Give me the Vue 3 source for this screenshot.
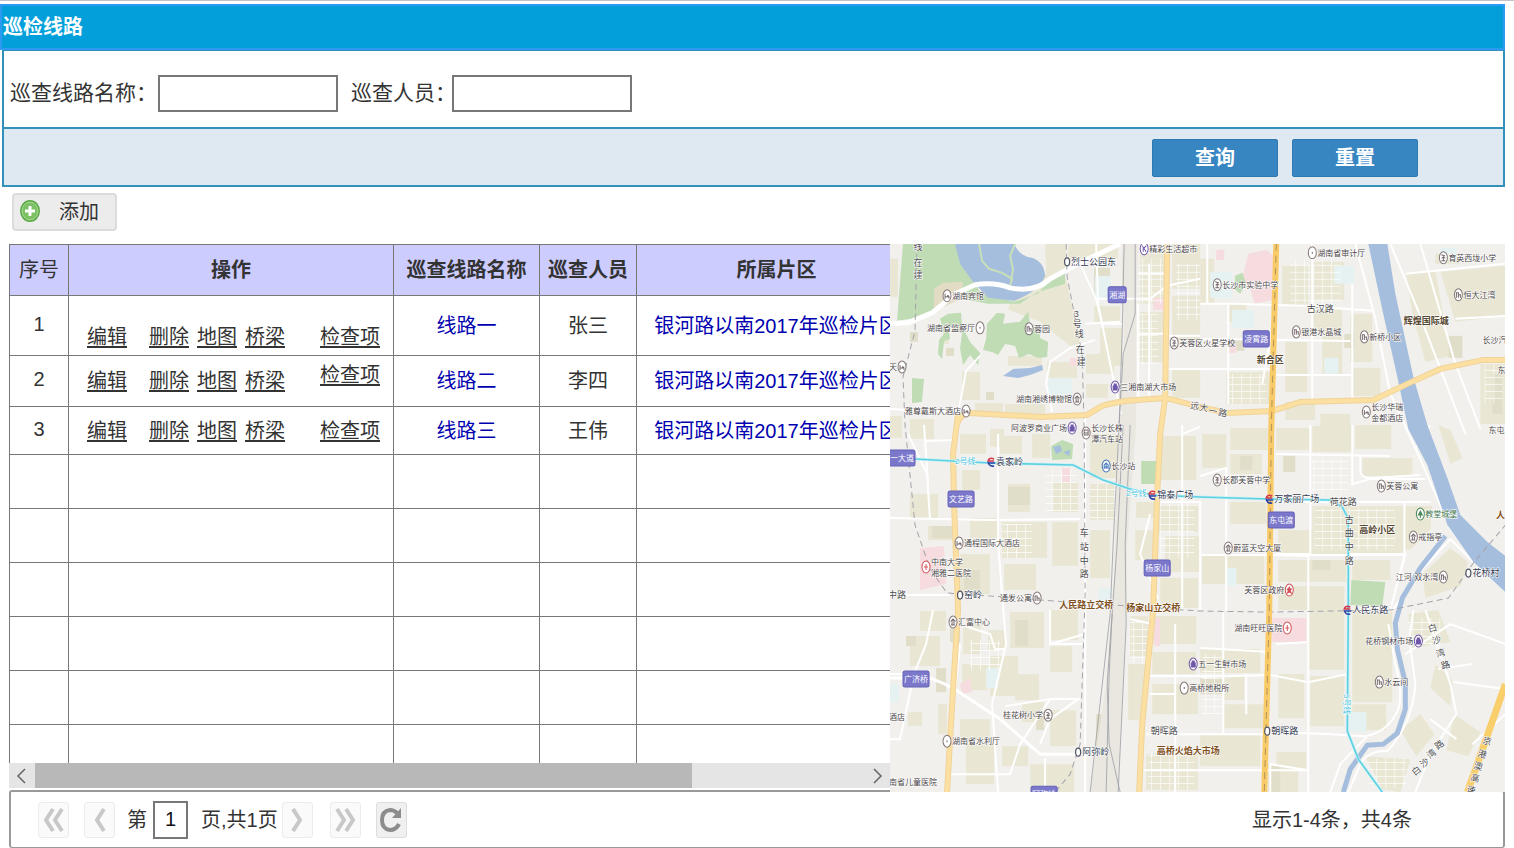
<template>
  <div class="page">
    <section class="panel">
      <h1 class="panel-title">巡检线路</h1>
      <form class="search" @submit.prevent>
        <div class="fields">
          <label for="route-name">巡查线路名称：</label>
          <input id="route-name" v-model="query.name" type="text" />
          <label for="route-user">巡查人员：</label>
          <input id="route-user" v-model="query.user" type="text" />
        </div>
        <div class="actions">
          <button type="submit" class="btn">查询</button>
          <button type="button" class="btn" @click="reset">重置</button>
        </div>
      </form>
    </section>

    <div class="toolbar">
      <button type="button" class="add-btn">
        <svg width="22" height="24" viewBox="0 0 22 24">
          <ellipse cx="11" cy="11" rx="10" ry="11" fill="#5aa845" />
          <ellipse cx="11" cy="11" rx="8" ry="9" fill="#7cc264" stroke="#a9dc96" />
          <path d="M11 6v10M6 11h10" stroke="#fff" stroke-width="3" />
        </svg>
        <span>添加</span>
      </button>
    </div>

    <div class="main">
      <div class="list">
        <div class="table-view">
          <table>
            <colgroup>
              <col class="c-no" /><col class="c-ops" /><col class="c-name" />
              <col class="c-user" /><col class="c-area" /><col />
            </colgroup>
            <thead>
              <tr>
                <th class="plain">序号</th>
                <th>操作</th>
                <th>巡查线路名称</th>
                <th>巡查人员</th>
                <th>所属片区</th>
                <th></th>
              </tr>
            </thead>
            <tbody>
              <tr v-for="r in rows" :key="r.id" :class="r.cls">
                <td class="no">{{ r.id }}</td>
                <td>
                  <div class="ops">
                    <a href="#" class="edit">编辑</a>
                    <a href="#">删除</a>
                    <a href="#">地图</a>
                    <a href="#">桥梁</a>
                    <a href="#" class="check">检查项</a>
                  </div>
                </td>
                <td class="blue">{{ r.name }}</td>
                <td>{{ r.user }}</td>
                <td class="blue">{{ r.area }}</td>
                <td></td>
              </tr>
              <tr v-for="n in 6" :key="'e' + n" class="empty">
                <td v-for="c in 6" :key="c"></td>
              </tr>
            </tbody>
          </table>
        </div>
        <div class="scrollbar">
          <button type="button" aria-label="向左">
            <svg width="12" height="16" viewBox="0 0 12 16"><path d="M9 1L2 8l7 7" /></svg>
          </button>
          <div class="track"><div class="thumb"></div></div>
          <button type="button" aria-label="向右">
            <svg width="12" height="16" viewBox="0 0 12 16"><path d="M3 1l7 7-7 7" /></svg>
          </button>
        </div>
      </div>

      <svg class="map" viewBox="0 0 615 548" preserveAspectRatio="xMidYMid slice">
        <defs>
          <pattern id="lanes" width="9" height="7" patternUnits="userSpaceOnUse">
            <path d="M0 0H9M0 0V7" stroke="#fff" stroke-width="1.2" fill="none" />
          </pattern>
        </defs>
        <rect width="615" height="548" fill="#f2f0ed" />

        <!-- blocks -->
        <path v-for="(d, i) in blocks" :key="'b' + i" :d="d" fill="#e9e7d4" />
        <path v-for="(d, i) in darkBlocks" :key="'d' + i" :d="d" fill="#e0ddc9" />
        <path v-for="(d, i) in pinks" :key="'p' + i" :d="d" fill="#f6dcdf" />
        <path v-for="(d, i) in pales" :key="'q' + i" :d="d" fill="#e6f2f1" />
        <path v-for="(d, i) in lanes" :key="'l' + i" :d="d" fill="url(#lanes)" />

        <!-- parks and water -->
        <path d="M13 0H68L76 25L90 48L124 58L148 50L163 32L175 24V40L146 49L130 60L98 60L72 55L44 64L42 72L7 77Z" fill="#bfdcb5" />
        <path d="M155 0H176V25L158 38L146 49L148 40L156 30Z" fill="#e9e7d4" />
        <path d="M44 45L53 39L73 38L72 55L44 67Z" fill="#e3dcc5" />
        <g fill="#bfdcb5">
          <path d="M50 75L58 70L71 69L72 82L80 98L90 109L88 121L80 111L73 121L70 104L72 90L58 82L60 95L54 97L52 115L48 110L49 96L54 90Z" />
          <path d="M97 80L107 69L115 70L113 80L130 78L138 68L140 80L149 84L150 94L158 98L157 113L148 114L139 110L129 114L125 102L115 100L108 111L102 108L93 106L96 95Z" />
          <path d="M22 134L34 135L32 158L22 159Z" />
          <path d="M161 202L172 196L183 200L182 215L162 216Z" />
          <path d="M251 217H267V240H251Z" />
          <path d="M461 336L495 338L492 362L460 361Z" />
          <path d="M345 32L352 29L356 40L350 50L344 45Z" />
        </g>
        <path d="M163 203L170 201L172 207L166 210ZM173 208L180 206L179 212Z" fill="#a5bede" />
        <path d="M65 0H124Q130 13 142 14Q154 18 155 32Q150 47 124 57L98 54L83 38L70 20Z" fill="#a5bede" />
        <path d="M89 0L92 17L99 25L112 29L122 35L120 42M125 0L120 12L123 26L121 36" fill="none" stroke="#c9dfb8" stroke-width="2" />
        <path d="M113 132L123 125L140 124L152 121L153 126L140 131L128 134Z" fill="#a5bede" />

        <!-- rail corridor -->
        <path d="M232 0H248L246 60V181L237 300L236 366L228 548H200L216 440L224 330L228 181L234 100Z" fill="#e9e7e0" />

        <!-- streets -->
        <path v-for="(d, i) in streets" :key="'s' + i" :d="d" class="street" />
        <path d="M0 80L18 79L42 69L65 50L85 41Q104 38 120 44Q145 49 160 35L190 19L230 0" fill="none" stroke="#fff" stroke-width="5" />
        <path d="M0 434H40L55 440L66 446L110 475L150 510H188" fill="none" stroke="#fff" stroke-width="3" />
        <path d="M478 0L492 66L507 133L518 185L537 221L557 281L583 318L615 348V312L597 298L570 271L557 234L537 181L523 133L505 50L497 0Z" fill="#a5bede" />
        <path d="M555 292L530 324L512 354L505 379L507 405L515 439V465L507 489L493 500L477 501L460 525L453 548" fill="none" stroke="#a5bede" stroke-width="5" />

        <!-- railways -->
        <g fill="none" stroke="#9c9da4" stroke-width=".8">
          <path d="M234 0L232 90L229 181L223 300L220 370L200 548M245 0V70L233 110L229 181M233 181L227 300L222 370L217 440L219 500L230 548M240 181L235 300L236 380L228 548M222 370L219 430L216 548" />
        </g>
        <g class="rail-dash">
          <path d="M176 0L177 33L192 110L194 185L195 350L190 500L180 530L165 548" />
          <path d="M27 0L25 87L13 133L15 181L25 281L40 325L57 349L115 353L165 357L310 367L380 368L500 366L558 354L583 319L615 281" />
        </g>

        <!-- main roads -->
        <g fill="none">
          <path :d="yellowRoads" stroke="#f0d39a" stroke-width="6" />
          <path :d="yellowRoads" stroke="#fce0a2" stroke-width="4" />
          <path d="M386 0L381 185L379 366L374 548" stroke="#f9cb68" stroke-width="6" />
          <path d="M386 0L381 185L379 366L374 548" stroke="#b3935a" stroke-dasharray="7 5" />
          <path d="M615 440L577 548" stroke="#f9cf6c" stroke-width="7" />
          <path :d="metro" stroke="#c9f2f6" stroke-width="3" />
          <path :d="metro" stroke="#5fd0e2" stroke-width="1.6" />
        </g>

        <!-- names -->
        <g v-for="b in badges" :key="b.t">
          <rect :x="b.x - b.w / 2" :y="b.y - 8" :width="b.w" height="16" rx="2" fill="#7b78cb" stroke="#6460b8" />
          <text :x="b.x" :y="b.y + 3" class="badge">{{ b.t }}</text>
        </g>
        <g v-for="(p, i) in pois" :key="'poi' + i">
          <g :transform="`translate(${p[0]} ${p[1]})`">
            <ellipse rx="4" ry="6" fill="#fff" :stroke="tones[p[2]] || '#85787a'" />
            <path :d="glyphs[p[2]]" :stroke="tones[p[2]] || '#75686a'" :fill="solid[p[2]] ? tones[p[2]] : 'none'" />
          </g>
          <text
            v-for="(line, k) in p[3].split('/')"
            :key="k"
            :x="p[4] ? p[0] - 5 : p[0] + 5"
            :y="p[1] + 3 + (p[3].includes('/') ? k * 11 - 5 : 0)"
            :class="['poi', { left: p[4], green: p[2] === 'tree' }]"
          >{{ line }}</text>
        </g>
        <g v-for="s in stations" :key="s.t">
          <ellipse v-if="!s.m" :cx="s.x" :cy="s.y" rx="2.5" ry="4" fill="#fff" stroke="#4d5263" stroke-width="1.2" />
          <g v-else :transform="`translate(${s.x} ${s.y})`" fill="none">
            <path d="M3 -3Q-2 -5 -3 -1H3" stroke="#d3394a" stroke-width="1.6" />
            <path d="M-3 0Q-2 5 3 4M-3 1H4" stroke="#3146a8" stroke-width="1.6" />
          </g>
          <text :x="s.x + (s.m ? 5 : 4)" :y="s.y + 3" class="station">{{ s.t }}</text>
        </g>
        <text v-for="a in areas" :key="a.t" :x="a.x" :y="a.y" :class="['area', { orange: a.o }]">{{ a.t }}</text>
        <text v-for="(c, i) in roadNames" :key="'r' + i" class="road" :transform="`translate(${c[0]} ${c[1]}) rotate(${c[3] || 0})`">{{ c[2] }}</text>
        <text x="65" y="220" class="line-name">2号线</text>
        <text x="236" y="252" class="line-name">2号线</text>
        <text transform="translate(454 450) rotate(90)" class="line-name">5号线</text>
        <text x="-9" y="541" class="poi">湖南省儿童医院</text>
        <text x="-1" y="476" class="poi">酒店</text>
        <text x="592" y="99" class="poi">长沙汽车</text>
        <text x="607" y="129" class="poi">东</text>
        <text x="598" y="189" class="poi">东屯</text>
      </svg>
    </div>

    <div class="pager">
      <button type="button" class="pg off first" aria-label="首页">
        <svg viewBox="0 0 24 28"><path d="M11 3L4 14l7 11M20 3l-7 11 7 11" /></svg>
      </button>
      <button type="button" class="pg off prev" aria-label="上一页">
        <svg viewBox="0 0 24 28"><path d="M16 3L9 14l7 11" /></svg>
      </button>
      <label for="page-no">第</label>
      <input id="page-no" v-model="pageNo" type="text" />
      <span class="total">页,共1页</span>
      <button type="button" class="pg off next" aria-label="下一页">
        <svg viewBox="0 0 24 28"><path d="M8 3l7 11-7 11" /></svg>
      </button>
      <button type="button" class="pg off last" aria-label="末页">
        <svg viewBox="0 0 24 28"><path d="M4 3l7 11-7 11M13 3l7 11-7 11" /></svg>
      </button>
      <button type="button" class="pg refresh" aria-label="刷新">
        <svg viewBox="0 0 24 28">
          <path d="M18 7Q15 4 11 4Q3 5 3 14Q3 23 11 24Q17 24 20 18" />
          <path class="tip" d="M22 2V12H13Z" />
        </svg>
      </button>
      <span class="summary">显示1-4条，共4条</span>
    </div>
  </div>
</template>

<script setup>
import { reactive, ref } from 'vue'

const query = reactive({ name: '', user: '' })
const pageNo = ref('1')

function reset() {
  query.name = ''
  query.user = ''
}

const rows = [
  { id: 1, name: '线路一', user: '张三', area: '银河路以南2017年巡检片区', cls: 'tall' },
  { id: 2, name: '线路二', user: '李四', area: '银河路以南2017年巡检片区', cls: 'mid' },
  { id: 3, name: '线路三', user: '王伟', area: '银河路以南2017年巡检片区', cls: 'low' }
]

const box = (x, y, w, h) => `M${x} ${y}h${w}v${h}h${-w}Z`

const blocks = [
  'M120 58L165 38L176 35L190 100L180 102L150 78L118 66Z',
  box(0, 15, 8, 38), box(178, 0, 50, 15), box(204, 62, 26, 18), box(210, 84, 22, 38),
  box(72, 128, 18, 28), box(53, 80, 6, 20), box(118, 112, 34, 10), box(196, 110, 28, 20),
  box(157, 118, 30, 16), box(196, 140, 22, 14), box(85, 159, 28, 10), box(0, 172, 12, 22),
  box(20, 175, 24, 20), box(100, 185, 14, 18), box(115, 160, 40, 12), box(250, 10, 26, 50),
  box(282, 0, 28, 45), box(282, 52, 28, 46), box(250, 68, 24, 50), box(282, 126, 28, 28),
  box(310, 15, 14, 45), box(338, 60, 18, 18), box(392, 22, 26, 40), box(420, 18, 34, 38),
  box(460, 70, 22, 48), box(395, 98, 22, 50), box(422, 66, 30, 22), box(336, 128, 44, 32),
  box(432, 92, 20, 38), box(462, 124, 28, 28), box(395, 158, 30, 18), box(430, 170, 30, 14),
  'M516 30L545 27L560 112L535 118L522 70Z',
  'M550 28L615 22V72L565 78Z',
  box(590, 120, 25, 60), box(545, 10, 24, 10),
  box(70, 190, 26, 20), box(110, 192, 22, 18), box(142, 190, 18, 24), box(200, 190, 28, 44),
  box(118, 240, 22, 28), box(72, 226, 18, 20), box(20, 250, 28, 24), box(80, 274, 28, 20),
  box(112, 278, 45, 36), box(162, 238, 26, 30), box(162, 278, 26, 44), box(200, 240, 24, 36),
  box(200, 286, 20, 48), box(70, 310, 30, 40), box(38, 282, 25, 14), box(114, 320, 32, 26),
  box(246, 258, 18, 16), box(270, 192, 36, 44), box(268, 262, 40, 26), box(275, 292, 34, 36),
  box(245, 286, 18, 30), box(270, 334, 38, 30), box(312, 190, 24, 34), box(340, 184, 38, 22),
  box(340, 210, 32, 20), box(386, 184, 34, 22), box(422, 182, 40, 26), box(465, 181, 36, 24),
  box(472, 214, 50, 18), box(340, 258, 36, 22), box(312, 310, 62, 30), box(388, 286, 50, 24),
  box(422, 262, 92, 48), box(388, 316, 68, 22), box(462, 316, 38, 20), box(388, 342, 66, 24),
  'M515 262H542L540 285L520 306L514 305Z',
  'M560 304L578 318L570 342L535 354L532 330Z',
  'M548 181L560 186L572 214L560 220Z',
  box(30, 367, 26, 20), box(73, 380, 18, 30), box(98, 386, 18, 20), box(120, 368, 34, 36),
  box(160, 366, 28, 30), box(20, 392, 30, 30), box(72, 420, 26, 26), box(100, 412, 28, 40),
  box(125, 430, 24, 26), box(160, 402, 22, 26), box(132, 458, 22, 20), box(160, 466, 26, 36),
  box(18, 468, 14, 14), box(70, 475, 30, 20), box(76, 500, 28, 40), box(112, 502, 26, 20),
  box(140, 520, 44, 28), box(48, 460, 9, 30), box(240, 372, 18, 40), box(262, 372, 44, 28),
  box(262, 440, 46, 30), box(238, 420, 18, 56), box(262, 408, 44, 22), box(256, 510, 52, 36),
  box(310, 405, 60, 24), box(334, 432, 20, 24), box(334, 460, 40, 24), box(310, 490, 60, 32),
  box(388, 430, 26, 44), box(418, 366, 36, 60), box(420, 432, 34, 50), box(462, 368, 40, 90),
  box(462, 460, 34, 26), box(386, 508, 30, 18), box(380, 526, 28, 22),
  'M518 370L548 366L560 398L522 404Z',
  'M545 420L562 436L560 462L540 444Z',
  'M510 486L530 470L544 490L526 512Z',
  'M564 470L590 488L578 512L556 506Z',
  'M475 512L520 515L510 548L492 545Z'
]

const darkBlocks = [
  box(204, 24, 16, 30), box(156, 4, 12, 16), box(232, 10, 14, 40), box(118, 243, 22, 18),
  box(393, 212, 12, 16), box(350, 212, 12, 14), box(42, 282, 20, 12), box(74, 326, 16, 20),
  box(125, 376, 13, 26), box(60, 384, 10, 14), box(146, 466, 8, 20), box(16, 392, 10, 10),
  box(344, 95, 10, 12), box(454, 90, 10, 14), box(558, 92, 14, 22), box(602, 130, 10, 40),
  box(310, 432, 22, 18), box(378, 520, 12, 28), box(46, 424, 10, 24), box(206, 470, 7, 62),
  box(20, 88, 8, 10), box(56, 104, 8, 8), box(96, 148, 8, 8), box(422, 316, 18, 10)
]

const pinks = [
  'M358 10L376 6L386 14L384 56L364 60L360 44L352 34Z',
  box(263, 54, 11, 12), 'M30 304L54 302L56 340L30 346Z', box(382, 374, 34, 24),
  box(172, 224, 8, 14), 'M70 440L80 434L82 448L72 450Z', box(264, 374, 6, 28), box(338, 100, 8, 9),
  box(180, 114, 12, 8), box(326, 6, 8, 10)
]

const pales = [
  box(205, 32, 16, 22), box(320, 28, 22, 26), box(158, 134, 24, 18), box(444, 22, 20, 18),
  box(0, 440, 9, 18), box(342, 66, 22, 18), box(434, 114, 14, 16), box(456, 468, 20, 20),
  box(208, 344, 14, 16), box(96, 424, 12, 20), box(336, 324, 10, 18), box(550, 4, 16, 12)
]

const lanes = [
  box(248, 15, 25, 45), box(248, 70, 20, 50), box(400, 15, 50, 45), box(338, 130, 38, 30),
  box(286, 20, 24, 56), box(422, 215, 36, 34), box(424, 264, 80, 42), box(155, 225, 33, 42),
  box(200, 240, 26, 36), box(112, 280, 30, 34), box(240, 376, 22, 44), box(312, 410, 22, 60),
  box(258, 508, 46, 38), box(478, 514, 38, 30), box(518, 374, 32, 28), box(594, 120, 18, 40),
  box(80, 396, 30, 30), box(270, 260, 34, 54)
]

const streets = [
  'M0 274L100 276L190 275', 'M66 196L34 197M0 165L66 168', 'M195 170V548', 'M108 190V300L116 400L102 460L108 548',
  'M34 181L38 240M18 190L37 230L40 275', 'M160 118L156 140L162 168', 'M68 170L76 127L90 112',
  'M190 20L206 55L212 80H232', 'M206 0L208 60L220 120L231 170', 'M195 80L230 78', 'M160 118L180 104L205 96',
  'M204 55H260L277 42', 'M248 60V154M259 20V154M248 90H277M248 30H277', 'M277 42L310 35M277 92H310',
  'M277 125H386', 'M310 60H345L415 62L482 67', 'M317 0V60M338 60V160M422 0V155M462 40V155',
  'M386 62L372 140M310 95L460 97', 'M386 131L462 131', 'M465 0L485 75L500 150L530 215L560 285L590 325',
  'M500 0L525 60L550 125L575 190', 'M530 0L565 120L590 185', 'M565 75L615 72M515 30L615 20',
  'M267 258H310V366M292 181V366M292 190L310 183', 'M386 210L500 212M420 181V310H386',
  'M462 181V240L480 235H535M470 212V228Q472 235 482 234L530 231', 'M310 232L336 224V366M310 311H516',
  'M386 258H540', 'M540 181L525 205M514 258V312L500 366', 'M418 310V548', 'M458 310H515L510 330',
  'M310 404L380 408M310 433L380 431L418 438L457 430', 'M333 366V490M310 490H374M356 430V470',
  'M374 487L440 490L475 492Q498 488 508 465Q513 450 505 420L498 380',
  'M523 366L519 395L525 440Q522 480 497 507Q478 506 470 520L458 548', 'M440 548L450 520L477 492',
  'M535 366L560 440L566 470L540 510L525 548', 'M563 438L615 445M615 470L582 500', 'M615 400L560 380L515 410',
  'M502 366L532 325L560 295M560 295L585 320', 'M0 430H20M43 366L36 400L24 430L10 495H0',
  'M68 380L100 390L105 405H115', 'M60 530H120L130 500L160 455H190', 'M115 462L160 455M150 500L160 475L188 455',
  'M160 366V400L195 390M160 400H195', 'M254 526H418M256 432H333M285 380V548M240 375L262 380',
  'M260 450H285M256 490H310', 'M380 311L418 312M386 400L418 398', 'M260 270L250 310L268 355',
  'M0 351H60', 'M380 548V520L418 526M155 514V548', 'M65 446L70 400M566 495L540 475', 'M548 425L582 420'
]

const yellowRoads =
  'M66 185Q68 170 80 169L150 173L197 171L212 162Q228 157 247 156L275 154L310 163L337 169L382 167L410 158L483 156L517 140L550 125L593 116H615' +
  'M68 170L63 210L64 260L68 366L63 445L57 548M277 0L275 154L270 190L267 250L263 366L252 480L249 548'

const metro =
  'M0 214L25 215L100 219L183 221L213 236L240 245L262 251L310 253L377 255L440 256L452 263L458 275V366L457 487L468 515L492 548'

const badges = [
  { x: 227, y: 51, w: 18, t: '湘湖' },
  { x: 366, y: 95, w: 26, t: '凌霄路' },
  { x: 12, y: 214, w: 26, t: '一大道' },
  { x: 71, y: 255, w: 26, t: '文艺路' },
  { x: 391, y: 276, w: 26, t: '东屯渡' },
  { x: 267, y: 324, w: 26, t: '杨家山' },
  { x: 26, y: 435, w: 26, t: '广济桥' },
  { x: 154, y: 550, w: 26, t: '阿弥岭' }
]

const tones = {
  market: '#6f57a8', hospital: '#d2555a', gov: '#d2555a', tree: '#4c8a5a', train: '#3f73b5', shop: '#6f57a8'
}
const solid = { market: true, tree: true, gov: true }
const glyphs = {
  hotel: 'M-2 -2V3M-2 1H2V3M0 0H2',
  dot: 'M0 -1V1',
  build: 'M-2 3V-2H0V3M0 0H2V3',
  school: 'M-2 -3L1 -2L-1 0H2M-2 3H2M0 0V3',
  museum: 'M-2 -1L0 -3L2 -1ZM-2 3H2M-1 0V3M1 0V3',
  market: 'M-2 -1H2V3H-2ZM-1 -1V-3H1V-1',
  shop: 'M-2 -3L2 3M2 -3L-1 0V3',
  bus: 'M-2 -3H2V2H-2ZM-2 0H2',
  train: 'M-2 3V-1L0 -3L2 -1V3M-2 1H2M0 -3V3',
  hospital: 'M0 -3V3M-2 0H2',
  gov: 'M0 -3L1 -1H2L1 1L2 3L0 2L-2 3L-1 1L-2 -1H-1Z',
  tree: 'M0 -3L2 1H-2ZM0 1V4'
}

// x, y, kind, name, name stands left of the mark
const pois = [
  [57, 52, 'hotel', '湖南宾馆'],
  [90, 84, 'dot', '湖南省监察厅', true],
  [139, 85, 'build', '蓉园'],
  [254, 5, 'shop', '精彩生活超市'],
  [284, 99, 'school', '芙蓉区火星学校'],
  [12, 123, 'hotel', '天', true],
  [225, 143, 'market', '三湘南湖大市场'],
  [187, 155, 'museum', '湖南湘绣博物馆', true],
  [76, 167, 'hotel', '雅尊戴斯大酒店', true],
  [182, 184, 'market', '阿波罗商业广场', true],
  [196, 189, 'bus', '长沙长株/潭汽车站'],
  [216, 222, 'train', '长沙站'],
  [422, 9, 'dot', '湖南省审计厅'],
  [327, 41, 'school', '长沙市实验中学'],
  [553, 14, 'school', '育英西垅小学'],
  [568, 51, 'build', '恒大江湾'],
  [406, 88, 'build', '银港水晶城'],
  [474, 93, 'build', '新桥小区'],
  [476, 168, 'hotel', '长沙华瑞/金都酒店'],
  [327, 236, 'school', '长郡芙蓉中学'],
  [491, 242, 'build', '芙蓉公寓'],
  [530, 270, 'tree', '教堂城堡'],
  [523, 293, 'museum', '戒指亭'],
  [553, 333, 'build', '江河·双水湾', true],
  [338, 304, 'museum', '蔚蓝天空大厦'],
  [399, 346, 'gov', '芙蓉区政府', true],
  [397, 384, 'hospital', '湖南旺旺医院', true],
  [528, 397, 'market', '花桥钢材市场', true],
  [489, 438, 'build', '水云间'],
  [303, 420, 'market', '五一生鲜市场'],
  [294, 444, 'dot', '高桥地税所'],
  [69, 299, 'hotel', '通程国际大酒店'],
  [36, 323, 'hospital', '中南大学/湘雅二医院'],
  [147, 354, 'build', '通发公寓', true],
  [63, 378, 'museum', '汇富中心'],
  [158, 471, 'school', '桂花树小学', true],
  [57, 497, 'dot', '湖南省水利厅']
]

const stations = [
  { x: 177, y: 18, t: '烈士公园东' },
  { x: 70, y: 351, t: '窑岭' },
  { x: 188, y: 508, t: '阿弥岭' },
  { x: 377, y: 487, t: '朝晖路' },
  { x: 578, y: 329, t: '花桥村' },
  { x: 101, y: 218, t: '袁家岭', m: true },
  { x: 262, y: 251, t: '锦泰广场', m: true },
  { x: 379, y: 255, t: '万家丽广场', m: true },
  { x: 457, y: 366, t: '人民东路', m: true }
]

const areas = [
  { x: 380, y: 119, t: '新合区' },
  { x: 536, y: 80, t: '辉煌国际城' },
  { x: 487, y: 289, t: '高岭小区' },
  { x: 196, y: 364, t: '人民路立交桥', o: true },
  { x: 263, y: 367, t: '杨家山立交桥', o: true },
  { x: 298, y: 510, t: '高桥火焰大市场', o: true },
  { x: 610, y: 274, t: '人', o: true }
]

const roadNames = [
  [430, 68, '古汉路'], [453, 261, '荷花路'], [274, 490, '朝晖路'], [7, 354, '中路'],
  [304, 165, '远', 10], [313, 167, '大', 10], [322, 170, '一', 10], [332, 172, '路', 10],
  [459, 279, '古'], [459, 292, '曲'], [459, 306, '中'], [459, 320, '路'],
  [194, 292, '车'], [194, 306, '站'], [194, 320, '中'], [194, 333, '路'],
  [543, 387, '白', -15], [547, 399, '沙', -15], [551, 412, '湾', -15], [556, 424, '路', -15],
  [528, 529, '白', -38], [536, 521, '沙', -38], [543, 512, '湾', -38], [551, 503, '路', -38],
  [596, 500, '京', 15], [591, 513, '港', 15], [587, 525, '澳', 15], [584, 537, '高', 15], [580, 549, '速', 15],
  [186, 73, '3'], [187, 83, '号'], [189, 93, '线'], [190, 109, '在'], [191, 121, '建'],
  [28, 6, '线'], [28, 22, '在'], [28, 34, '建']
]
</script>

<style>
body {
  margin: 0;
  background: #fff;
}
</style>

<style scoped>
.page {
  border-top: 1px solid #c4c4c8;
  padding: 3px 9px 0 0;
  font-family: "Liberation Sans", "Noto Sans CJK SC", sans-serif;
  font-size: 20px;
  line-height: 26px;
  color: #333;
}
.page * {
  box-sizing: border-box;
}
button,
input {
  font: inherit;
  color: inherit;
}
.panel-title {
  margin: 0;
  height: 46px;
  border: 2px solid #2b9af0;
  background: #039fdb;
  color: #fff;
  font-size: 20px;
  font-weight: 700;
  line-height: 42px;
  padding-left: 1px;
}
.search {
  margin-left: 2px;
  border: 2px solid #3390b8;
  border-top-width: 1px;
}
.fields {
  display: flex;
  align-items: center;
  height: 76px;
  padding: 8px 0 0 6px;
}
.fields label {
  width: 148px;
  font-size: 21px;
  white-space: nowrap;
}
.fields input {
  width: 180px;
  height: 37px;
  border: 2px solid #777;
  background: #fff;
  padding: 0 6px;
}
.fields label + input + label {
  width: 101px;
  margin-left: 13px;
}
.actions {
  display: flex;
  justify-content: flex-end;
  align-items: center;
  gap: 14px;
  height: 58px;
  padding: 2px 85px 0 0;
  border-top: 2px solid #3390b8;
  background: #dfe9f2;
}
.btn {
  width: 126px;
  height: 38px;
  border: 1px solid #2f79b3;
  border-radius: 2px;
  background: #3786c2;
  color: #fff;
  font-weight: 700;
  padding: 0;
}
.toolbar {
  padding: 6px 0 13px 12px;
}
.add-btn {
  display: flex;
  align-items: center;
  gap: 18px;
  width: 105px;
  height: 38px;
  border: 2px solid #dcdcdc;
  border-radius: 4px;
  background: #ececec;
  padding: 0 5px;
}
.main {
  display: grid;
  grid-template-columns: 880fr 615fr;
  margin-left: 9px;
  height: 546px;
}
.list {
  display: flex;
  flex-direction: column;
  min-width: 0;
}
.table-view {
  height: 519px;
  overflow: hidden;
}
table {
  width: 1110px;
  table-layout: fixed;
  border-collapse: collapse;
}
.c-no { width: 59px; }
.c-ops { width: 325px; }
.c-name { width: 146px; }
.c-user { width: 97px; }
.c-area { width: 280px; }
th,
td {
  border: 1px solid #777;
  padding: 0;
  text-align: center;
  white-space: nowrap;
}
th {
  height: 51px;
  background: #ccccff;
}
th.plain {
  font-weight: 400;
}
.tall { height: 60px; }
.mid { height: 51px; }
.low { height: 48px; }
.empty { height: 54px; }
td.no {
  padding-bottom: 4px;
}
.blue {
  color: #0000b0;
}
.ops {
  display: flex;
  align-items: center;
  gap: 8px;
  padding-left: 18px;
  height: 36px;
}
.ops a {
  color: #333;
  text-underline-offset: 2px;
}
.ops .edit {
  margin-right: 14px;
}
.ops .check {
  margin-left: 27px;
}
.tall .ops {
  height: 48px;
  align-items: flex-end;
}
.mid .ops {
  height: 39px;
}
.mid .check {
  align-self: flex-start;
}
.scrollbar {
  display: flex;
  height: 25px;
  background: #e5e5e5;
}
.scrollbar button {
  width: 26px;
  border: 0;
  padding: 0;
  background: none;
  line-height: 0;
}
.scrollbar path {
  fill: none;
  stroke: #666;
  stroke-width: 1.5;
}
.track {
  flex: 1;
}
.thumb {
  width: 79.3%;
  height: 25px;
  background: #b8b8b8;
}
.map {
  position: relative;
  display: block;
  width: 100%;
  height: 548px;
}
.street {
  fill: none;
  stroke: #fff;
  stroke-width: 2;
}
.rail-dash {
  fill: none;
  stroke: #a3a3aa;
  stroke-width: 1;
  stroke-dasharray: 6 4;
}
.map text {
  font-family: "Liberation Sans", "Noto Sans CJK SC", sans-serif;
  text-anchor: middle;
  paint-order: stroke;
  stroke: #fff;
  stroke-width: 1px;
}
.map .poi {
  font-size: 8px;
  text-anchor: start;
  fill: #4b4648;
}
.map .left {
  text-anchor: end;
}
.map .green {
  fill: #43764d;
}
.map .badge {
  font-size: 8px;
  fill: #fff;
  stroke: none;
}
.map .station {
  font-size: 9px;
  text-anchor: start;
  fill: #333a52;
}
.map .area {
  font-size: 9px;
  font-weight: 700;
  fill: #554630;
}
.map .orange {
  fill: #80501c;
}
.map .road {
  font-size: 9px;
  fill: #4e4e50;
}
.map .line-name {
  font-size: 8px;
  text-anchor: start;
  fill: #3ec4dc;
}
.pager {
  display: flex;
  align-items: center;
  height: 58px;
  margin-left: 9px;
  padding: 0 91px 0 27px;
  border: 2px solid #999;
  border-bottom-width: 1px;
  border-radius: 3px;
}
.pg {
  width: 31px;
  height: 36px;
  border: 1px solid #ddd;
  border-radius: 3px;
  background: #f0f0f0;
  padding: 0;
  line-height: 0;
}
.off {
  border-color: #ececec;
  background: #fafafa;
}
.pg svg {
  width: 24px;
  height: 28px;
}
.pg path {
  fill: none;
  stroke: #c8c8c8;
  stroke-width: 4;
}
.refresh path {
  stroke: #8c8c8c;
}
.refresh .tip {
  fill: #8c8c8c;
  stroke: none;
}
.prev {
  margin: 0 12px 0 15px;
}
.pager input {
  width: 35px;
  height: 38px;
  margin: 0 13px 0 6px;
  border: 2px solid #777;
  padding: 0;
  text-align: center;
  color: #111;
}
.next {
  margin: 0 17px 0 4px;
}
.last {
  margin-right: 15px;
}
.summary {
  margin-left: auto;
}
</style>
